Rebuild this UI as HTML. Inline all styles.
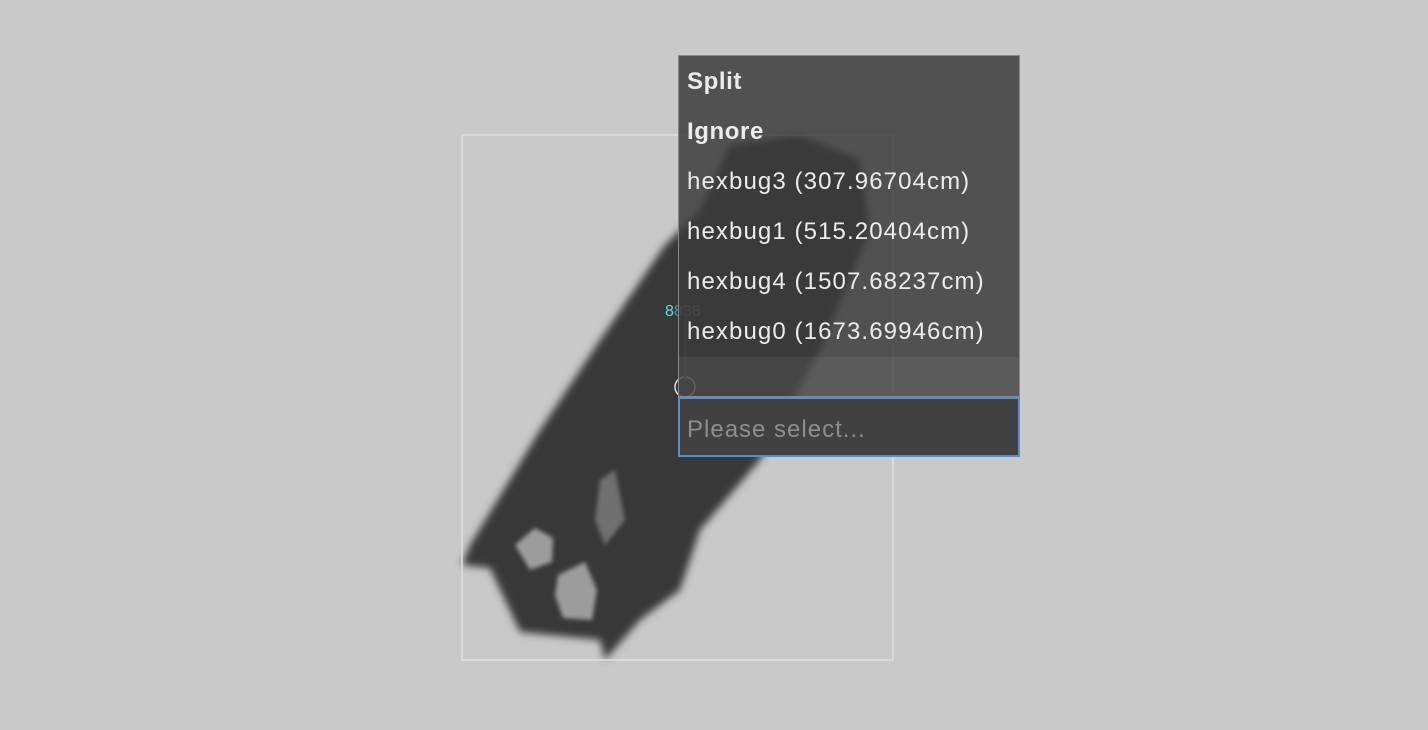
<!DOCTYPE html>
<html><head><meta charset="utf-8"><style>
html,body{margin:0;padding:0;}
body{width:1428px;height:730px;overflow:hidden;position:relative;background:#c9c9c9;font-family:"Liberation Sans",sans-serif;}
svg{position:absolute;left:0;top:0;}
.dd{position:absolute;left:678px;top:55px;width:340px;height:340px;background:rgba(58,58,58,0.84);border:1px solid #8a8a8a;}
.it{position:absolute;left:8px;color:#ececec;font-size:24px;line-height:30px;white-space:nowrap;letter-spacing:1.1px;}
.b{font-weight:bold;letter-spacing:0.6px;}
.inp{position:absolute;left:678px;top:397px;width:338px;height:56px;background:#414141;border:2px solid #5c8ccc;}
.inp span{position:absolute;left:7px;top:16px;color:#8e8e8e;font-size:24px;line-height:30px;letter-spacing:1px;}
</style></head><body>
<svg width="1428" height="730">
<defs><filter id="bl"><feGaussianBlur stdDeviation="4"/></filter>
<filter id="bl2"><feGaussianBlur stdDeviation="2"/></filter></defs>
<polygon filter="url(#bl)" fill="#383838" points="462,565 490,568 520,632 600,640 605,660 640,620 680,590 700,530 760,460 820,350 870,230 860,160 800,135 730,145 700,210 665,245 600,340 540,430 470,545"/>
<polygon filter="url(#bl2)" fill="#9c9c9c" points="515,545 535,528 553,538 552,562 530,570"/>
<polygon filter="url(#bl2)" fill="#9c9c9c" points="558,575 585,562 597,590 592,620 563,618 555,595"/>
<polygon filter="url(#bl2)" fill="#707070" points="600,480 615,470 625,520 605,545 595,520"/>
<rect x="462" y="135" width="431" height="525" fill="none" stroke="#e0e0e0" stroke-width="1.5"/>
<circle cx="685" cy="387" r="10" fill="none" stroke="#ddd" stroke-width="1.5"/>
<line x1="685" y1="320" x2="685" y2="380" stroke="#3a6a6a" stroke-width="2"/>
<text x="665" y="316" font-size="16" fill="#5fe0e8" font-family="Liberation Sans">8<tspan fill="#4a9a9a">838</tspan></text>
</svg>
<div class="dd">
<div class="it b" style="top:11px">Split</div>
<div class="it b" style="top:61px">Ignore</div>
<div class="it" style="top:111px">hexbug3 (307.96704cm)</div>
<div class="it" style="top:161px">hexbug1 (515.20404cm)</div>
<div class="it" style="top:211px">hexbug4 (1507.68237cm)</div>
<div class="it" style="top:261px">hexbug0 (1673.69946cm)</div>
<div style="position:absolute;left:0;top:301px;width:340px;height:39px;background:rgba(255,255,255,0.06)"></div>
</div>
<div class="inp"><span>Please select...</span></div>
</body></html>
